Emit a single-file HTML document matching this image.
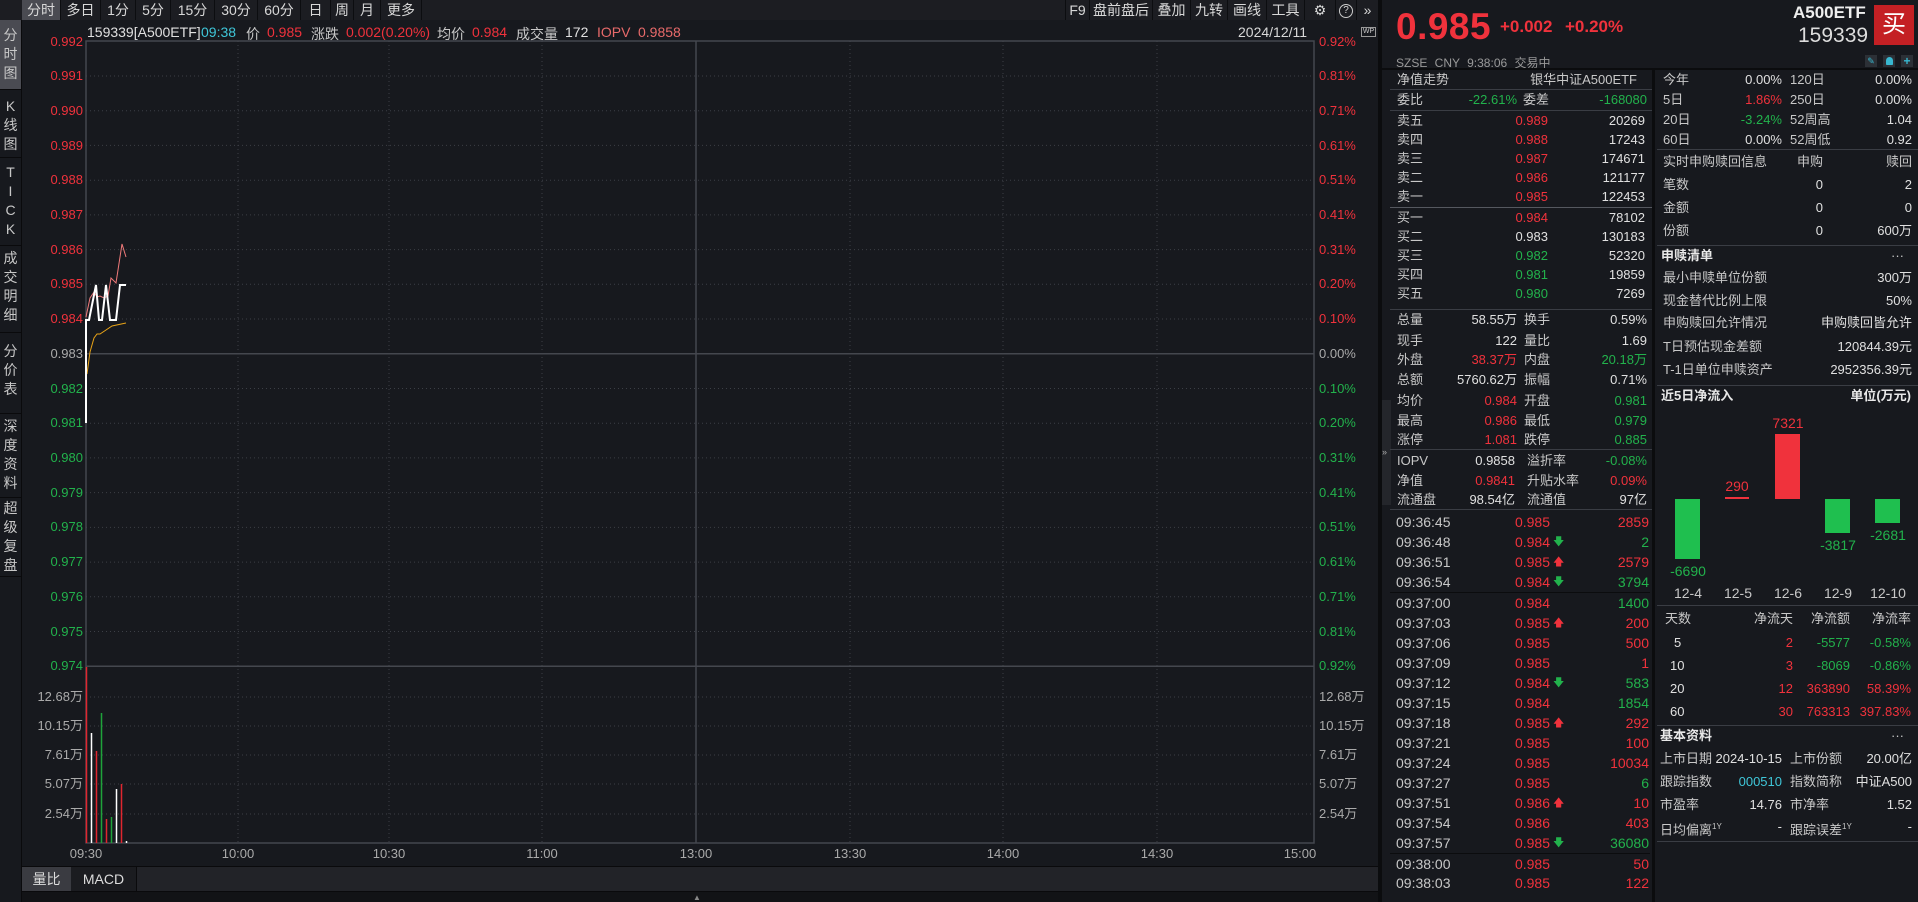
<!DOCTYPE html>
<html><head><meta charset="utf-8"><style>
*{margin:0;padding:0;box-sizing:border-box}
body{width:1918px;height:902px;background:#17191e;font-family:"Liberation Sans","Noto Sans CJK SC",sans-serif;font-size:13px;color:#c8c8c8;position:relative;overflow:hidden}
.abs{position:absolute}
.tb{position:absolute;top:0;height:20px;line-height:20px;text-align:center;color:#d8d8d8;border-right:1px solid #0c0d10;font-size:14px}
.side{position:absolute;left:0;width:21px;color:#c8c8c8;font-size:14px;text-align:center;line-height:19px;border-bottom:1px solid #0a0a0c}
.R{color:#f0323c}.G{color:#22b24c}.W{color:#e0e0e0}.T{color:#3fc6d8}
.row{position:absolute;height:18px;line-height:18px;white-space:nowrap}
.row span{position:absolute}
.L{left:1380px;width:273px}
.K{font-size:14px}
.Q{left:1655px;width:263px}
.hl{position:absolute;height:1px;background:#3a3d44}
.bold{font-weight:bold;color:#e8e8e8}
.inf span{position:absolute;top:0}
</style></head><body>
<div class="abs" style="left:0;top:0;width:1380px;height:20px;background:#1c1d22"></div>
<div class="tb" style="left:22px;width:39px;background:#4a4b52">分时</div>
<div class="tb" style="left:61px;width:40px">多日</div>
<div class="tb" style="left:101px;width:35px">1分</div>
<div class="tb" style="left:136px;width:35px">5分</div>
<div class="tb" style="left:171px;width:44px">15分</div>
<div class="tb" style="left:215px;width:43px">30分</div>
<div class="tb" style="left:258px;width:43px">60分</div>
<div class="tb" style="left:301px;width:30px">日</div>
<div class="tb" style="left:331px;width:23px">周</div>
<div class="tb" style="left:354px;width:27px">月</div>
<div class="tb" style="left:381px;width:41px">更多</div>
<div class="tb" style="left:1065px;width:25px;border-left:1px solid #0c0d10">F9</div>
<div class="tb" style="left:1090px;width:63px">盘前盘后</div>
<div class="tb" style="left:1153px;width:38px">叠加</div>
<div class="tb" style="left:1191px;width:37px">九转</div>
<div class="tb" style="left:1228px;width:39px">画线</div>
<div class="tb" style="left:1267px;width:38px">工具</div>
<div class="tb" style="left:1305px;width:31px">⚙</div>
<div class="tb" style="left:1336px;width:21px"><span style="display:inline-block;width:14px;height:14px;border:1px solid #ccc;border-radius:50%;line-height:12px;font-size:10px;vertical-align:middle">?</span></div>
<div class="tb" style="left:1357px;width:22px">»</div>
<div class="side" style="top:20px;height:70px;background:#4a4b52;padding-top:6px">分<br>时<br>图</div>
<div class="side" style="top:90px;height:68px;padding-top:7px">K<br>线<br>图</div>
<div class="side" style="top:158px;height:88px;padding-top:5px">T<br>I<br>C<br>K</div>
<div class="side" style="top:246px;height:87px;padding-top:3px">成<br>交<br>明<br>细</div>
<div class="side" style="top:333px;height:81px;padding-top:9px">分<br>价<br>表</div>
<div class="side" style="top:414px;height:84px;padding-top:3px">深<br>度<br>资<br>料</div>
<div class="side" style="top:498px;height:79px;padding-top:1px">超<br>级<br>复<br>盘</div>
<div class="abs" style="left:21px;top:20px;width:1px;height:882px;background:#0a0a0c"></div>
<div class="abs inf" style="left:0;top:24px;width:1300px;height:18px;white-space:nowrap;font-size:14px">
<span class="W" style="left:87px">159339[A500ETF]</span><span class="T" style="left:201px">09:38</span><span style="left:246px">价</span><span class="R" style="left:267px">0.985</span><span style="left:311px">涨跌</span><span class="R" style="left:346px">0.002(0.20%)</span><span style="left:437px">均价</span><span class="R" style="left:472px">0.984</span><span style="left:516px">成交量</span><span class="W" style="left:565px">172</span><span style="left:597px;color:#e86a6a">IOPV</span><span style="left:638px;color:#e86a6a">0.9858</span></div>
<div class="abs" style="left:1238px;top:24px;color:#d8d8d8;font-size:14px">2024/12/11</div>
<div class="abs" style="left:1361px;top:27px;width:15px;height:10px;border:1px solid #999;font-size:7px;line-height:8px;color:#ccc;text-align:center">WP</div>
<svg class="abs" style="left:0;top:0" width="1380" height="902" font-family="Liberation Sans, Noto Sans CJK SC, sans-serif" font-size="13">
<g stroke="#3c3f46" stroke-dasharray="1,3" stroke-width="1">
<line x1="86" x2="1314" y1="76" y2="76"/><line x1="86" x2="1314" y1="110.7" y2="110.7"/><line x1="86" x2="1314" y1="145.4" y2="145.4"/><line x1="86" x2="1314" y1="180.2" y2="180.2"/><line x1="86" x2="1314" y1="214.9" y2="214.9"/><line x1="86" x2="1314" y1="249.6" y2="249.6"/><line x1="86" x2="1314" y1="284.3" y2="284.3"/><line x1="86" x2="1314" y1="319" y2="319"/><line x1="86" x2="1314" y1="388.5" y2="388.5"/><line x1="86" x2="1314" y1="423.2" y2="423.2"/><line x1="86" x2="1314" y1="457.9" y2="457.9"/><line x1="86" x2="1314" y1="492.6" y2="492.6"/><line x1="86" x2="1314" y1="527.4" y2="527.4"/><line x1="86" x2="1314" y1="562.1" y2="562.1"/><line x1="86" x2="1314" y1="596.8" y2="596.8"/><line x1="86" x2="1314" y1="631.5" y2="631.5"/>
<line x1="86" x2="1314" y1="697" y2="697"/><line x1="86" x2="1314" y1="726" y2="726"/><line x1="86" x2="1314" y1="755" y2="755"/><line x1="86" x2="1314" y1="784" y2="784"/><line x1="86" x2="1314" y1="814" y2="814"/>
<line x1="238" x2="238" y1="41" y2="843"/><line x1="389" x2="389" y1="41" y2="843"/><line x1="542" x2="542" y1="41" y2="843"/><line x1="850" x2="850" y1="41" y2="843"/><line x1="1003" x2="1003" y1="41" y2="843"/><line x1="1157" x2="1157" y1="41" y2="843"/>
</g>
<g stroke="#44474e" stroke-width="1.5" fill="none">
<rect x="86" y="41" width="1228" height="802"/>
<line x1="86" x2="1314" y1="353.8" y2="353.8"/>
<line x1="86" x2="1314" y1="666.2" y2="666.2"/>
<line x1="696" x2="696" y1="41" y2="843"/>
</g>
<g text-anchor="end">
<text x="83" y="46" fill="#f0323c">0.992</text><text x="83" y="80" fill="#f0323c">0.991</text><text x="83" y="115" fill="#f0323c">0.990</text><text x="83" y="150" fill="#f0323c">0.989</text><text x="83" y="184" fill="#f0323c">0.988</text><text x="83" y="219" fill="#f0323c">0.987</text><text x="83" y="254" fill="#f0323c">0.986</text><text x="83" y="288" fill="#f0323c">0.985</text><text x="83" y="323" fill="#f0323c">0.984</text><text x="83" y="358" fill="#aaa">0.983</text><text x="83" y="393" fill="#22b24c">0.982</text><text x="83" y="427" fill="#22b24c">0.981</text><text x="83" y="462" fill="#22b24c">0.980</text><text x="83" y="497" fill="#22b24c">0.979</text><text x="83" y="531" fill="#22b24c">0.978</text><text x="83" y="566" fill="#22b24c">0.977</text><text x="83" y="601" fill="#22b24c">0.976</text><text x="83" y="636" fill="#22b24c">0.975</text><text x="83" y="670" fill="#22b24c">0.974</text>
<g fill="#aaa"><text x="83" y="701">12.68万</text><text x="83" y="730">10.15万</text><text x="83" y="759">7.61万</text><text x="83" y="788">5.07万</text><text x="83" y="818">2.54万</text></g>
</g>
<g>
<text x="1319" y="46" fill="#f0323c">0.92%</text><text x="1319" y="80" fill="#f0323c">0.81%</text><text x="1319" y="115" fill="#f0323c">0.71%</text><text x="1319" y="150" fill="#f0323c">0.61%</text><text x="1319" y="184" fill="#f0323c">0.51%</text><text x="1319" y="219" fill="#f0323c">0.41%</text><text x="1319" y="254" fill="#f0323c">0.31%</text><text x="1319" y="288" fill="#f0323c">0.20%</text><text x="1319" y="323" fill="#f0323c">0.10%</text><text x="1319" y="358" fill="#aaa">0.00%</text><text x="1319" y="393" fill="#22b24c">0.10%</text><text x="1319" y="427" fill="#22b24c">0.20%</text><text x="1319" y="462" fill="#22b24c">0.31%</text><text x="1319" y="497" fill="#22b24c">0.41%</text><text x="1319" y="531" fill="#22b24c">0.51%</text><text x="1319" y="566" fill="#22b24c">0.61%</text><text x="1319" y="601" fill="#22b24c">0.71%</text><text x="1319" y="636" fill="#22b24c">0.81%</text><text x="1319" y="670" fill="#22b24c">0.92%</text>
<g fill="#aaa"><text x="1319" y="701">12.68万</text><text x="1319" y="730">10.15万</text><text x="1319" y="759">7.61万</text><text x="1319" y="788">5.07万</text><text x="1319" y="818">2.54万</text></g>
</g>
<g fill="#aaa" text-anchor="middle">
<text x="86" y="858">09:30</text><text x="238" y="858">10:00</text><text x="389" y="858">10:30</text><text x="542" y="858">11:00</text><text x="696" y="858">13:00</text><text x="850" y="858">13:30</text><text x="1003" y="858">14:00</text><text x="1157" y="858">14:30</text><text x="1300" y="858">15:00</text>
</g>
<polyline fill="none" stroke="#f07a7a" stroke-width="1" points="86,317 90,298 94,292 97,297 100,296 104,298 108,296 111,278 116,283 122,244 126,257"/>
<polyline fill="none" stroke="#e8a317" stroke-width="1" points="87,374 90,352 94,338 97,334 100,334 106,330 112,326 126,323"/>
<polyline fill="none" stroke="#fff" stroke-width="2" points="86,423 86,320 89,320 96,285 99,320 102,320 106,285 110,320 116,320 120,285 126,285"/>
<g stroke-width="1.5">
<line x1="86.5" x2="86.5" y1="667" y2="843" stroke="#e0262f"/>
<line x1="91.5" x2="91.5" y1="733" y2="843" stroke="#fff"/>
<line x1="96.5" x2="96.5" y1="751" y2="843" stroke="#e0262f"/>
<line x1="101.5" x2="101.5" y1="713" y2="843" stroke="#1fa33a"/>
<line x1="106.5" x2="106.5" y1="819" y2="843" stroke="#e0262f"/>
<line x1="111.5" x2="111.5" y1="817" y2="843" stroke="#1fa33a"/>
<line x1="116.5" x2="116.5" y1="789" y2="843" stroke="#fff"/>
<line x1="121.5" x2="121.5" y1="784" y2="843" stroke="#e0262f"/>
<line x1="126.5" x2="126.5" y1="841" y2="843" stroke="#fff"/>
</g>
</svg>
<div class="abs" style="left:22px;top:866px;width:1358px;height:26px;background:#222328;border-top:1px solid #0a0a0c;border-bottom:1px solid #0a0a0c"></div>
<div class="abs" style="left:22px;top:867px;width:49px;height:24px;background:#3a3b41;line-height:24px;text-align:center;color:#ddd;font-size:14px">量比</div>
<div class="abs" style="left:71px;top:867px;width:66px;height:24px;line-height:24px;text-align:center;color:#ddd;border-right:1px solid #0a0a0c;background:#1b1c20;font-size:14px">MACD</div>
<div class="abs" style="left:22px;top:892px;width:1358px;height:10px;background:#121316"></div>
<div class="abs" style="left:693px;top:893px;color:#888;font-size:8px">▲</div>
<div class="abs" style="left:1378px;top:0;width:4px;height:902px;background:#0b0c0e"></div>
<div class="abs" style="left:1382px;top:400px;width:9px;height:105px;background:#24262b;color:#aaa;font-size:9px;line-height:105px">»</div>
<div class="abs" style="left:1396px;top:6px;font-size:37px;font-weight:bold;color:#f0323c;letter-spacing:0.5px">0.985</div>
<div class="abs" style="left:1500px;top:17px;font-size:17px;font-weight:bold;color:#f0323c">+0.002</div>
<div class="abs" style="left:1565px;top:17px;font-size:17px;font-weight:bold;color:#f0323c">+0.20%</div>
<div class="abs" style="left:1793px;top:3px;font-size:17px;font-weight:bold;color:#eee">A500ETF</div>
<div class="abs" style="left:1798px;top:24px;font-size:21px;color:#ddd">159339</div>
<div class="abs" style="left:1874px;top:5px;width:40px;height:40px;background:#c42024;color:#fff;font-size:24px;text-align:center;line-height:40px">买</div>
<div class="abs" style="left:1396px;top:54px;font-size:12px;color:#999;word-spacing:4px">SZSE CNY 9:38:06 交易中</div>
<div class="abs" style="left:1865px;top:55px;width:12px;height:12px;background:#2c3036;color:#38b8d0;font-size:9px;text-align:center;line-height:12px">✎</div>
<div class="abs" style="left:1883px;top:55px;width:12px;height:12px;background:#2c3036"><div style="margin:2px auto;width:7px;height:8px;background:#38b8d0;border-radius:4px 4px 1px 1px"></div></div>
<div class="abs" style="left:1901px;top:55px;width:12px;height:12px;background:#2c3036;color:#38b8d0;font-size:12px;font-weight:bold;text-align:center;line-height:12px">+</div>
<div class="abs" style="left:1382px;top:68px;width:536px;height:2px;background:#0b0c0e"></div>
<div class="abs" style="left:1652px;top:70px;width:3px;height:832px;background:#0b0c0e"></div>

<div class="row L" style="top:71px"><span style="left:17px">净值走势</span><span style="right:16px">银华中证A500ETF</span></div>
<div class="hl" style="left:1390px;width:262px;top:89px"></div>
<div class="row L" style="top:91px"><span style="left:17px">委比</span><span class="G" style="right:136px">-22.61%</span><span style="left:143px">委差</span><span class="G" style="right:6px">-168080</span></div>
<div class="hl" style="left:1390px;width:262px;top:110px"></div>
<div class="row L" style="top:112px"><span style="left:17px">卖五</span><span class="R" style="right:105px">0.989</span><span class="W" style="right:8px">20269</span></div>
<div class="row L" style="top:131px"><span style="left:17px">卖四</span><span class="R" style="right:105px">0.988</span><span class="W" style="right:8px">17243</span></div>
<div class="row L" style="top:150px"><span style="left:17px">卖三</span><span class="R" style="right:105px">0.987</span><span class="W" style="right:8px">174671</span></div>
<div class="row L" style="top:169px"><span style="left:17px">卖二</span><span class="R" style="right:105px">0.986</span><span class="W" style="right:8px">121177</span></div>
<div class="row L" style="top:188px"><span style="left:17px">卖一</span><span class="R" style="right:105px">0.985</span><span class="W" style="right:8px">122453</span></div>
<div class="hl" style="left:1390px;width:262px;top:207px;background:#55585f"></div>
<div class="row L" style="top:209px"><span style="left:17px">买一</span><span class="R" style="right:105px">0.984</span><span class="W" style="right:8px">78102</span></div>
<div class="row L" style="top:228px"><span style="left:17px">买二</span><span class="W" style="right:105px">0.983</span><span class="W" style="right:8px">130183</span></div>
<div class="row L" style="top:247px"><span style="left:17px">买三</span><span class="G" style="right:105px">0.982</span><span class="W" style="right:8px">52320</span></div>
<div class="row L" style="top:266px"><span style="left:17px">买四</span><span class="G" style="right:105px">0.981</span><span class="W" style="right:8px">19859</span></div>
<div class="row L" style="top:285px"><span style="left:17px">买五</span><span class="G" style="right:105px">0.980</span><span class="W" style="right:8px">7269</span></div>
<div class="hl" style="left:1390px;width:262px;top:309px"></div>
<div class="row L" style="top:311px"><span style="left:17px">总量</span><span class="W" style="right:136px">58.55万</span><span style="left:144px">换手</span><span class="W" style="right:6px">0.59%</span></div>
<div class="row L" style="top:332px"><span style="left:17px">现手</span><span class="W" style="right:136px">122</span><span style="left:144px">量比</span><span class="W" style="right:6px">1.69</span></div>
<div class="row L" style="top:351px"><span style="left:17px">外盘</span><span class="R" style="right:136px">38.37万</span><span style="left:144px">内盘</span><span class="G" style="right:6px">20.18万</span></div>
<div class="row L" style="top:371px"><span style="left:17px">总额</span><span class="W" style="right:136px">5760.62万</span><span style="left:144px">振幅</span><span class="W" style="right:6px">0.71%</span></div>
<div class="row L" style="top:392px"><span style="left:17px">均价</span><span class="R" style="right:136px">0.984</span><span style="left:144px">开盘</span><span class="G" style="right:6px">0.981</span></div>
<div class="row L" style="top:412px"><span style="left:17px">最高</span><span class="R" style="right:136px">0.986</span><span style="left:144px">最低</span><span class="G" style="right:6px">0.979</span></div>
<div class="row L" style="top:431px"><span style="left:17px">涨停</span><span class="R" style="right:136px">1.081</span><span style="left:144px">跌停</span><span class="G" style="right:6px">0.885</span></div>
<div class="hl" style="left:1390px;width:262px;top:449px"></div>
<div class="row L" style="top:452px"><span style="left:17px">IOPV</span><span class="W" style="right:138px">0.9858</span><span style="left:147px">溢折率</span><span class="G" style="right:6px">-0.08%</span></div>
<div class="row L" style="top:472px"><span style="left:17px">净值</span><span class="R" style="right:138px">0.9841</span><span style="left:147px">升贴水率</span><span class="R" style="right:6px">0.09%</span></div>
<div class="row L" style="top:491px"><span style="left:17px">流通盘</span><span class="W" style="right:138px">98.54亿</span><span style="left:147px">流通值</span><span class="W" style="right:6px">97亿</span></div>
<div class="hl" style="left:1390px;width:262px;top:509px"></div>
<div class="row L K" style="top:513px"><span style="left:16px">09:36:45</span><span class="R" style="right:103px">0.985</span><span class="R" style="right:4px">2859</span></div>
<div class="row L K" style="top:533px"><span style="left:16px">09:36:48</span><span class="R" style="right:103px">0.984</span><span class="G" style="left:173px;font-size:11px">🡇</span><span class="G" style="right:4px">2</span></div>
<div class="row L K" style="top:553px"><span style="left:16px">09:36:51</span><span class="R" style="right:103px">0.985</span><span class="R" style="left:173px;font-size:11px">🡅</span><span class="R" style="right:4px">2579</span></div>
<div class="row L K" style="top:573px"><span style="left:16px">09:36:54</span><span class="R" style="right:103px">0.984</span><span class="G" style="left:173px;font-size:11px">🡇</span><span class="G" style="right:4px">3794</span></div>
<div class="hl" style="left:1390px;width:260px;top:592px;background:#0b0c0e"></div>
<div class="row L K" style="top:594px"><span style="left:16px">09:37:00</span><span class="R" style="right:103px">0.984</span><span class="G" style="right:4px">1400</span></div>
<div class="row L K" style="top:614px"><span style="left:16px">09:37:03</span><span class="R" style="right:103px">0.985</span><span class="R" style="left:173px;font-size:11px">🡅</span><span class="R" style="right:4px">200</span></div>
<div class="row L K" style="top:634px"><span style="left:16px">09:37:06</span><span class="R" style="right:103px">0.985</span><span class="R" style="right:4px">500</span></div>
<div class="row L K" style="top:654px"><span style="left:16px">09:37:09</span><span class="R" style="right:103px">0.985</span><span class="R" style="right:4px">1</span></div>
<div class="row L K" style="top:674px"><span style="left:16px">09:37:12</span><span class="R" style="right:103px">0.984</span><span class="G" style="left:173px;font-size:11px">🡇</span><span class="G" style="right:4px">583</span></div>
<div class="row L K" style="top:694px"><span style="left:16px">09:37:15</span><span class="R" style="right:103px">0.984</span><span class="G" style="right:4px">1854</span></div>
<div class="row L K" style="top:714px"><span style="left:16px">09:37:18</span><span class="R" style="right:103px">0.985</span><span class="R" style="left:173px;font-size:11px">🡅</span><span class="R" style="right:4px">292</span></div>
<div class="row L K" style="top:734px"><span style="left:16px">09:37:21</span><span class="R" style="right:103px">0.985</span><span class="R" style="right:4px">100</span></div>
<div class="row L K" style="top:754px"><span style="left:16px">09:37:24</span><span class="R" style="right:103px">0.985</span><span class="R" style="right:4px">10034</span></div>
<div class="row L K" style="top:774px"><span style="left:16px">09:37:27</span><span class="R" style="right:103px">0.985</span><span class="G" style="right:4px">6</span></div>
<div class="row L K" style="top:794px"><span style="left:16px">09:37:51</span><span class="R" style="right:103px">0.986</span><span class="R" style="left:173px;font-size:11px">🡅</span><span class="R" style="right:4px">10</span></div>
<div class="row L K" style="top:814px"><span style="left:16px">09:37:54</span><span class="R" style="right:103px">0.986</span><span class="R" style="right:4px">403</span></div>
<div class="row L K" style="top:834px"><span style="left:16px">09:37:57</span><span class="R" style="right:103px">0.985</span><span class="G" style="left:173px;font-size:11px">🡇</span><span class="G" style="right:4px">36080</span></div>
<div class="hl" style="left:1390px;width:260px;top:853px;background:#0b0c0e"></div>
<div class="row L K" style="top:855px"><span style="left:16px">09:38:00</span><span class="R" style="right:103px">0.985</span><span class="R" style="right:4px">50</span></div>
<div class="row L K" style="top:874px"><span style="left:16px">09:38:03</span><span class="R" style="right:103px">0.985</span><span class="R" style="right:4px">122</span></div>

<div class="row Q" style="top:71px"><span style="left:8px">今年</span><span class="W" style="right:136px">0.00%</span><span style="left:135px">120日</span><span class="W" style="right:6px">0.00%</span></div>
<div class="row Q" style="top:91px"><span style="left:8px">5日</span><span class="R" style="right:136px">1.86%</span><span style="left:135px">250日</span><span class="W" style="right:6px">0.00%</span></div>
<div class="row Q" style="top:111px"><span style="left:8px">20日</span><span class="G" style="right:136px">-3.24%</span><span style="left:135px">52周高</span><span class="W" style="right:6px">1.04</span></div>
<div class="row Q" style="top:131px"><span style="left:8px">60日</span><span class="W" style="right:136px">0.00%</span><span style="left:135px">52周低</span><span class="W" style="right:6px">0.92</span></div>
<div class="hl" style="left:1657px;width:261px;top:149px"></div>
<div class="row Q" style="top:153px"><span style="left:8px">实时申购赎回信息</span><span style="left:142px">申购</span><span style="right:6px">赎回</span></div>
<div class="row Q" style="top:176px"><span style="left:8px">笔数</span><span class="W" style="right:95px">0</span><span class="W" style="right:6px">2</span></div>
<div class="row Q" style="top:199px"><span style="left:8px">金额</span><span class="W" style="right:95px">0</span><span class="W" style="right:6px">0</span></div>
<div class="row Q" style="top:222px"><span style="left:8px">份额</span><span class="W" style="right:95px">0</span><span class="W" style="right:6px">600万</span></div>
<div class="hl" style="left:1657px;width:261px;top:245px"></div>
<div class="row Q" style="top:247px"><span class="bold" style="left:6px">申赎清单</span><span style="right:14px">···</span></div>
<div class="row Q" style="top:269px"><span style="left:8px">最小申赎单位份额</span><span class="W" style="right:6px">300万</span></div>
<div class="row Q" style="top:292px"><span style="left:8px">现金替代比例上限</span><span class="W" style="right:6px">50%</span></div>
<div class="row Q" style="top:314px"><span style="left:8px">申购赎回允许情况</span><span class="W" style="right:6px">申购赎回皆允许</span></div>
<div class="row Q" style="top:338px"><span style="left:8px">T日预估现金差额</span><span class="W" style="right:6px">120844.39元</span></div>
<div class="row Q" style="top:361px"><span style="left:8px">T-1日单位申赎资产</span><span class="W" style="right:6px">2952356.39元</span></div>
<div class="hl" style="left:1657px;width:261px;top:385px"></div>
<div class="row Q" style="top:387px"><span class="bold" style="left:6px">近5日净流入</span><span class="bold" style="right:7px">单位(万元)</span></div>
<div class="abs" style="left:1675px;top:499px;width:25px;height:60px;background:#1fbf4f"></div>
<div class="abs" style="left:1725px;top:497px;width:24px;height:2px;background:#f0323c"></div>
<div class="abs" style="left:1775px;top:434px;width:25px;height:65px;background:#f0323c"></div>
<div class="abs" style="left:1825px;top:499px;width:25px;height:34px;background:#1fbf4f"></div>
<div class="abs" style="left:1875px;top:499px;width:25px;height:24px;background:#1fbf4f"></div>
<div class="abs G" style="left:1663px;top:563px;width:50px;text-align:center;font-size:14px">-6690</div>
<div class="abs R" style="left:1712px;top:478px;width:50px;text-align:center;font-size:14px">290</div>
<div class="abs R" style="left:1763px;top:415px;width:50px;text-align:center;font-size:14px">7321</div>
<div class="abs G" style="left:1813px;top:537px;width:50px;text-align:center;font-size:14px">-3817</div>
<div class="abs G" style="left:1863px;top:527px;width:50px;text-align:center;font-size:14px">-2681</div>
<div class="abs" style="left:1663px;top:585px;width:50px;text-align:center;font-size:14px">12-4</div>
<div class="abs" style="left:1713px;top:585px;width:50px;text-align:center;font-size:14px">12-5</div>
<div class="abs" style="left:1763px;top:585px;width:50px;text-align:center;font-size:14px">12-6</div>
<div class="abs" style="left:1813px;top:585px;width:50px;text-align:center;font-size:14px">12-9</div>
<div class="abs" style="left:1863px;top:585px;width:50px;text-align:center;font-size:14px">12-10</div>
<div class="hl" style="left:1657px;width:261px;top:605px"></div>
<div class="row Q" style="top:610px"><span style="left:10px">天数</span><span style="right:125px">净流天</span><span style="right:68px">净流额</span><span style="right:7px">净流率</span></div>
<div class="row Q" style="top:634px"><span class="W" style="left:19px">5</span><span class="R" style="right:125px">2</span><span class="G" style="right:68px">-5577</span><span class="G" style="right:7px">-0.58%</span></div>
<div class="row Q" style="top:657px"><span class="W" style="left:15px">10</span><span class="R" style="right:125px">3</span><span class="G" style="right:68px">-8069</span><span class="G" style="right:7px">-0.86%</span></div>
<div class="row Q" style="top:680px"><span class="W" style="left:15px">20</span><span class="R" style="right:125px">12</span><span class="R" style="right:68px">363890</span><span class="R" style="right:7px">58.39%</span></div>
<div class="row Q" style="top:703px"><span class="W" style="left:15px">60</span><span class="R" style="right:125px">30</span><span class="R" style="right:68px">763313</span><span class="R" style="right:7px">397.83%</span></div>
<div class="hl" style="left:1657px;width:261px;top:725px"></div>
<div class="row Q" style="top:727px"><span class="bold" style="left:5px">基本资料</span><span style="right:14px">···</span></div>
<div class="row Q" style="top:750px"><span style="left:5px">上市日期</span><span class="W" style="right:136px">2024-10-15</span><span style="left:135px">上市份额</span><span class="W" style="right:6px">20.00亿</span></div>
<div class="row Q" style="top:773px"><span style="left:5px">跟踪指数</span><span class="T" style="right:136px">000510</span><span style="left:135px">指数简称</span><span class="W" style="right:6px">中证A500</span></div>
<div class="row Q" style="top:796px"><span style="left:5px">市盈率</span><span class="W" style="right:136px">14.76</span><span style="left:135px">市净率</span><span class="W" style="right:6px">1.52</span></div>
<div class="row Q" style="top:818px"><span style="left:5px">日均偏离<sup style="font-size:8px">1Y</sup></span><span class="W" style="right:136px">-</span><span style="left:135px">跟踪误差<sup style="font-size:8px">1Y</sup></span><span class="W" style="right:6px">-</span></div>
<div class="hl" style="left:1657px;width:261px;top:841px"></div>
</body></html>
